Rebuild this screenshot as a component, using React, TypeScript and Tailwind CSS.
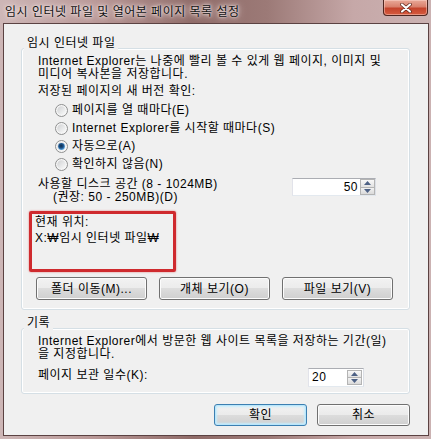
import clsx from "clsx";

function Radio({ checked }: { checked?: boolean }) {
  return (
    <svg width="13" height="13" viewBox="0 0 13 13" className="shrink-0" aria-hidden>
      <defs>
        <linearGradient id="radio-bg" x1="0" y1="0" x2="1" y2="1">
          <stop offset="0" stopColor="#cfd0d2" />
          <stop offset="1" stopColor="#fbfbfb" />
        </linearGradient>
        <radialGradient id="radio-dot" cx="0.45" cy="0.4" r="0.6">
          <stop offset="0" stopColor="#0e2e4e" />
          <stop offset="0.55" stopColor="#1c5188" />
          <stop offset="1" stopColor="#5aa6e0" />
        </radialGradient>
      </defs>
      <circle cx="6.5" cy="6.5" r="6" fill="#f6f6f6" stroke="#8e8f8f" />
      <circle cx="6.5" cy="6.5" r="4.3" fill="url(#radio-bg)" />
      {checked && <circle cx="6.5" cy="6.5" r="3.4" fill="url(#radio-dot)" />}
    </svg>
  );
}

function SpinArrows({ className }: { className?: string }) {
  return (
    <div className={clsx("flex flex-col border border-[#b4b4b4] bg-[#e6e6e6]", className)}>
      <div className="flex flex-1 items-center justify-center border-b border-[#b4b4b4] bg-[linear-gradient(#f8f8f8,#e2e2e2)]">
        <svg width="7" height="4" viewBox="0 0 7 4" aria-hidden>
          <path d="M0 4L3.5 0L7 4Z" fill="#4d6185" />
        </svg>
      </div>
      <div className="flex flex-1 items-center justify-center bg-[linear-gradient(#f2f2f2,#dadada)]">
        <svg width="7" height="4" viewBox="0 0 7 4" aria-hidden>
          <path d="M0 0L3.5 4L7 0Z" fill="#4d6185" />
        </svg>
      </div>
    </div>
  );
}

function Btn({
  children,
  primary,
  className,
}: {
  children: React.ReactNode;
  primary?: boolean;
  className?: string;
}) {
  return (
    <button
      type="button"
      className={clsx(
        "flex items-center justify-center rounded-[3px] border bg-[linear-gradient(#f2f2f2_0%,#ebebeb_50%,#dddddd_50%,#cfcfcf_100%)] leading-none text-black",
        primary
          ? "border-[#3c7fb1] shadow-[inset_0_0_0_1px_#b9e6fb,inset_0_0_2px_2px_#c7ecfc]"
          : "border-[#707070] shadow-[inset_0_0_0_1px_#fcfcfc]",
        className,
      )}
    >
      {children}
    </button>
  );
}

function GroupLabel({ children }: { children: React.ReactNode }) {
  return (
    <span className="relative z-10 ml-[3px] self-start bg-[#f0f0f0] px-[3px] leading-[14px]">
      {children}
    </span>
  );
}

export default function App() {
  const options = [
    "페이지를 열 때마다(E)",
    "Internet Explorer를 시작할 때마다(S)",
    "자동으로(A)",
    "확인하지 않음(N)",
  ];

  return (
    <div className="flex h-[439px] w-[431px] flex-col bg-[linear-gradient(90deg,#cdb6b6_0%,#b99897_22%,#8f6b68_45%,#9c7a77_62%,#c6a8a8_82%,#cbb2b2_100%)] font-['Liberation_Sans','Noto_Sans_CJK_KR',sans-serif] text-[12px] tracking-[0.5px] text-black">
      {/* Title bar */}
      <div className="flex h-[23px] shrink-0 items-start">
        <span className="whitespace-nowrap pl-[5px] pt-[5px] leading-[14px] text-[#111] [text-shadow:0_0_8px_#f3e6e6,0_0_4px_#f3e6e6,0_0_2px_#f3e6e6]">
          임시 인터넷 파일 및 열어본 페이지 목록 설정
        </span>
        <div className="ml-auto mr-[3px] flex h-[16px] w-[45px] items-center justify-center rounded-b-[4px] border border-t-0 border-[#4e2620] bg-[linear-gradient(#e9a998_0%,#d9806c_45%,#c4432b_55%,#d65b3f_100%)] shadow-[inset_0_0_0_1px_rgba(255,220,210,0.45)]">
          <svg width="12" height="10" viewBox="0 0 12 10" aria-hidden>
            <path d="M2 1.5L10 8.5M10 1.5L2 8.5" stroke="#5a2318" strokeWidth="3.6" strokeLinecap="round" />
            <path d="M2 1.5L10 8.5M10 1.5L2 8.5" stroke="#ffffff" strokeWidth="2.2" strokeLinecap="round" />
          </svg>
        </div>
      </div>

      {/* Client area */}
      <div className="flex flex-1 flex-col pb-[3px] pl-[3px] pr-[2px]">
        <div className="flex flex-1 flex-col border border-[#5b4242] bg-[#f0f0f0] pl-[17px] pr-[18px]">
          {/* Temporary internet files */}
          <div className="mt-[12px] flex flex-col">
            <GroupLabel>임시 인터넷 파일</GroupLabel>
            <div className="-mt-[2px] flex flex-col rounded-[3px] border border-[#d5dfe5] pb-[9px] pl-[16px] pt-[6px] shadow-[inset_0_0_0_1px_#ffffff]">
              <p className="whitespace-nowrap leading-[13px]">
                Internet Explorer는 나중에 빨리 볼 수 있게 웹 페이지, 이미지 및
                <br />
                미디어 복사본을 저장합니다.
              </p>
              <p className="mt-[4px] leading-[13px]">저장된 페이지의 새 버전 확인:</p>
              <div className="mt-[3px] flex flex-col">
                {options.map((o, i) => (
                  <div key={o} className="flex h-[18px] items-center gap-[4px] pl-[17px]">
                    <Radio checked={i === 2} />
                    <span className="whitespace-nowrap leading-[13px]">{o}</span>
                  </div>
                ))}
              </div>

              <div className="mt-[4px] flex items-start">
                <div className="whitespace-nowrap pt-[1px] leading-[13px]">
                  <p>사용할 디스크 공간 (8 - 1024MB)</p>
                  <p className="pl-[15px]">(권장: 50 - 250MB)(D)</p>
                </div>
                <div className="ml-auto mr-[33px] mt-[1px] flex h-[18px] w-[84px] border border-[#abadb3] border-b-[#e3e9ef] border-l-[#e2e3ea] border-r-[#dbdfe6] bg-white">
                  <span className="flex-1 pr-[2px] text-right leading-[16px]">50</span>
                  <SpinArrows className="w-[15px]" />
                </div>
              </div>

              <div className="-ml-[9px] mt-[7px] flex h-[61px] w-[147px] flex-col rounded-[2px] border-[3px] border-[#cf2a2e] pl-[3px] pt-[2px] shadow-[0_0_2px_#e07070]">
                <p className="leading-[13px]">현재 위치:</p>
                <p className="mt-[3px] whitespace-nowrap leading-[13px]">X:₩임시 인터넷 파일₩</p>
              </div>

              <div className="-ml-[2px] mt-[5px] flex gap-[12px]">
                <Btn className="h-[23px] w-[111px]">폴더 이동(M)...</Btn>
                <Btn className="h-[23px] w-[111px]">개체 보기(O)</Btn>
                <Btn className="h-[23px] w-[111px]">파일 보기(V)</Btn>
              </div>
            </div>
          </div>

          {/* History */}
          <div className="mt-[6px] flex flex-col">
            <GroupLabel>기록</GroupLabel>
            <div className="-mt-[2px] flex flex-col rounded-[3px] border border-[#d5dfe5] pb-[6px] pl-[16px] pt-[6px] shadow-[inset_0_0_0_1px_#ffffff]">
              <p className="whitespace-nowrap leading-[13px]">
                Internet Explorer에서 방문한 웹 사이트 목록을 저장하는 기간(일)
                <br />을 지정합니다.
              </p>
              <div className="mt-[7px] flex items-start">
                <span className="pt-[1px] leading-[13px]">페이지 보관 일수(K):</span>
                <div className="ml-auto mr-[45px] flex h-[19px] w-[56px] border border-[#abadb3] border-b-[#e3e9ef] border-l-[#e2e3ea] border-r-[#dbdfe6] bg-white">
                  <span className="flex-1 pl-[3px] leading-[17px]">20</span>
                  <SpinArrows className="my-[1px] mr-[1px] w-[15px]" />
                </div>
              </div>
            </div>
          </div>

          {/* Dialog buttons */}
          <div className="mt-[10px] flex justify-end gap-[10px]">
            <Btn primary className="h-[22px] w-[93px]">
              확인
            </Btn>
            <Btn className="h-[22px] w-[93px]">취소</Btn>
          </div>
        </div>
      </div>
    </div>
  );
}
